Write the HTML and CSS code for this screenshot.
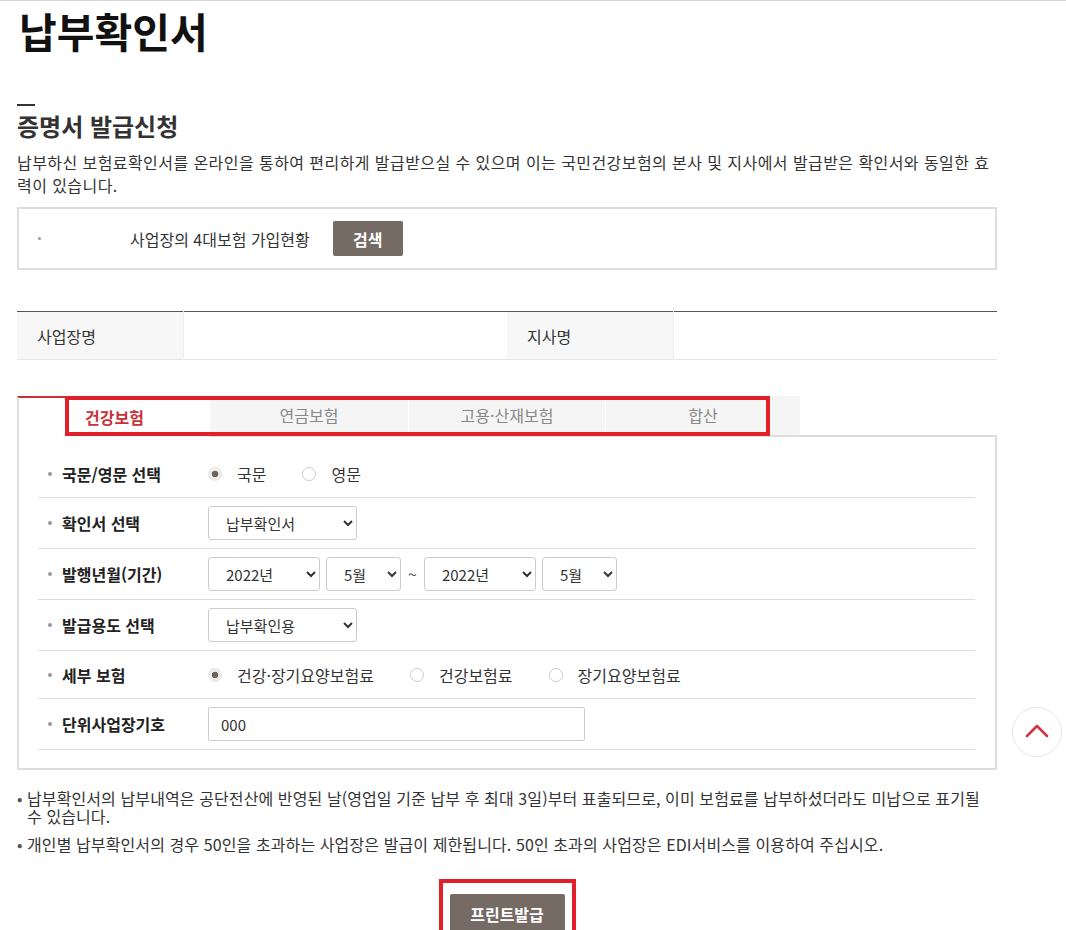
FILE: index.html
```html
<!DOCTYPE html>
<html lang="ko">
<head>
    <meta charset="UTF-8">
    <meta name="viewport" content="width=device-width, initial-scale=1.0">
    <title>납부확인서</title>
    <link rel="stylesheet" href="styles.css">
</head>
<body>
    <div class="page">
        <h1 class="page-title">납부확인서</h1>

        <span class="section-bar"></span>
        <h2 class="section-title">증명서 발급신청</h2>
        <p class="intro">납부하신 보험료확인서를 온라인을 통하여 편리하게 발급받으실 수 있으며 이는 국민건강보험의 본사 및 지사에서 발급받은 확인서와 동일한 효력이 있습니다.</p>

        <div class="search-box">
            <span class="search-dot"></span>
            <span class="search-label">사업장의 4대보험 가입현황</span>
            <button type="button" class="btn btn-search">검색</button>
        </div>

        <table class="info-table">
            <tr>
                <th class="col-th">사업장명</th>
                <td class="col-td"></td>
                <th class="col-th">지사명</th>
                <td class="col-td"></td>
            </tr>
        </table>

        <div class="tabs">
            <a class="tab tab-active">건강보험</a>
            <a class="tab tab-2">연금보험</a>
            <a class="tab tab-3">고용·산재보험</a>
            <a class="tab tab-4">합산</a>
            <span class="tab-fill"></span>
            <span class="highlight tabs-highlight"></span>
        </div>

        <div class="panel">
            <div class="form-row short">
                <span class="form-label">국문/영문 선택</span>
                <div class="radio-group">
                    <label class="radio"><input type="radio" name="lang" checked>국문</label>
                    <label class="radio"><input type="radio" name="lang">영문</label>
                </div>
            </div>

            <div class="form-row">
                <span class="form-label">확인서 선택</span>
                <select class="select w-149">
                    <option>납부확인서</option>
                </select>
            </div>

            <div class="form-row">
                <span class="form-label">발행년월(기간)</span>
                <div class="period">
                    <select class="select w-112"><option>2022년</option></select>
                    <select class="select w-75"><option>5월</option></select>
                    <span class="tilde">~</span>
                    <select class="select w-112"><option>2022년</option></select>
                    <select class="select w-75"><option>5월</option></select>
                </div>
            </div>

            <div class="form-row">
                <span class="form-label">발급용도 선택</span>
                <select class="select w-149">
                    <option>납부확인용</option>
                </select>
            </div>

            <div class="form-row short">
                <span class="form-label">세부 보험</span>
                <div class="radio-group">
                    <label class="radio"><input type="radio" name="detail" checked>건강·장기요양보험료</label>
                    <label class="radio"><input type="radio" name="detail">건강보험료</label>
                    <label class="radio"><input type="radio" name="detail">장기요양보험료</label>
                </div>
            </div>

            <div class="form-row">
                <span class="form-label">단위사업장기호</span>
                <input type="text" class="text-input" value="000">
            </div>
        </div>

        <ul class="notes">
            <li>납부확인서의 납부내역은 공단전산에 반영된 날(영업일 기준 납부 후 최대 3일)부터 표출되므로, 이미 보험료를 납부하셨더라도 미납으로 표기될 수 있습니다.</li>
            <li>개인별 납부확인서의 경우 50인을 초과하는 사업장은 발급이 제한됩니다. 50인 초과의 사업장은 EDI서비스를 이용하여 주십시오.</li>
        </ul>

        <div class="actions">
            <span class="print-wrap">
                <button type="button" class="btn btn-print">프린트발급</button>
                <span class="highlight print-highlight"></span>
            </span>
        </div>
    </div>

    <a class="top-btn" href="#">
        <svg width="24" height="14" viewBox="0 0 24 14">
            <path d="M2 12 L12 2 L22 12" fill="none" stroke="#d2353d" stroke-width="2.6" stroke-linecap="round" stroke-linejoin="round"/>
        </svg>
    </a>
</body>
</html>
```

FILE: styles.css
```css
:root {
    --text-color: #333;
    --line-color: #ddd;
    --brown: #756a64;
    --red: #c9303a;
    --mark-red: #e31f2a;
}

* {
    margin: 0;
    padding: 0;
    box-sizing: border-box;
}

body {
    font-family: "Noto Sans CJK KR", "Malgun Gothic", sans-serif;
    font-size: 16px;
    color: var(--text-color);
    background-color: #fff;
    border-top: 1px solid #d8d8d8;
}

.page {
    width: 1014px;
    padding: 0 17px 40px;
}

.page-title {
    font-size: 41px;
    line-height: 59px;
    font-weight: 700;
    color: #111;
    padding-left: 2px;
}

.section-bar {
    display: block;
    width: 18px;
    height: 2px;
    background-color: #333;
    margin-top: 44px;
}

.section-title {
    font-size: 24px;
    line-height: 30px;
    font-weight: 700;
    margin-top: 5px;
}

.intro {
    margin-top: 10px;
    line-height: 23px;
    letter-spacing: 0.43px;
}

/* search box */
.search-box {
    margin-top: 10px;
    border: 2px solid var(--line-color);
    padding: 12px 0;
    display: flex;
    align-items: center;
}

.search-dot {
    width: 3px;
    height: 3px;
    border-radius: 50%;
    background-color: #999;
    margin-left: 19px;
}

.search-label {
    margin-left: 89px;
}

.btn {
    border: none;
    border-radius: 2px;
    background-color: var(--brown);
    color: #fff;
    font-family: inherit;
    font-size: 16px;
    font-weight: 700;
    cursor: pointer;
}

.btn-search {
    width: 70px;
    height: 35px;
    margin-left: 23px;
}

/* info table */
.info-table {
    margin-top: 41px;
    width: 100%;
    border-collapse: collapse;
    border-top: 1px solid #555;
    border-bottom: 1px solid #e5e5e5;
}

.info-table th,
.info-table td {
    height: 48px;
}

.col-th {
    width: 166px;
    background-color: #f7f7f7;
    font-weight: 400;
    text-align: left;
    padding-left: 20px;
}

.col-td {
    width: 324px;
    border-left: 1px solid #eee;
}

/* tabs */
.tabs {
    position: relative;
    margin-top: 36px;
    display: flex;
    height: 41px;
}

.tab {
    display: block;
    background-color: #f5f5f5;
    color: #888;
    text-align: center;
    line-height: 39px;
    border-bottom: 2px solid var(--line-color);
    border-left: 1px solid #fff;
}

.tab-active {
    width: 193px;
    background-color: #fff;
    color: var(--red);
    font-weight: 700;
    border-top: 2px solid var(--red);
    border-left: 2px solid var(--line-color);
    border-bottom: none;
    line-height: 38px;
}

.tab-2 { width: 198px; border-left: none; }
.tab-3 { width: 197px; }
.tab-4 { width: 195px; }

.tab-fill {
    flex: 1;
    border-bottom: 2px solid var(--line-color);
}

.highlight {
    position: absolute;
    border: 4px solid var(--mark-red);
    pointer-events: none;
}

.tabs-highlight {
    left: 48px;
    top: 0;
    width: 705px;
    height: 40px;
}

/* form panel */
.panel {
    border: 2px solid var(--line-color);
    border-top: none;
    padding: 13px 20px 18px 19px;
}

.form-row {
    display: flex;
    align-items: center;
    height: 51px;
    border-bottom: 1px solid var(--line-color);
}

.form-row.short {
    height: 48px;
}

.form-label {
    width: 170px;
    flex-shrink: 0;
    display: flex;
    align-items: center;
    padding-left: 10px;
    font-weight: 700;
    color: #222;
}

.form-label::before {
    content: "";
    width: 4px;
    height: 4px;
    border-radius: 50%;
    background-color: #999;
    margin-right: 10px;
}

.radio-group {
    display: flex;
    align-items: center;
}

.radio {
    display: flex;
    align-items: center;
    margin-right: 36px;
}

.radio input {
    appearance: none;
    -webkit-appearance: none;
    width: 14px;
    height: 14px;
    margin: 0 15px 0 0;
    border: 1px solid #ccc;
    border-radius: 50%;
    background-color: #fff;
}

.radio input:checked {
    border-color: #e6e6e6;
    background: radial-gradient(circle, #6e625c 0 3px, #ededed 3.6px);
}

.select {
    height: 34px;
    border: 1px solid #ccc;
    border-radius: 3px;
    padding: 0 8px 0 13px;
    font-family: inherit;
    font-size: 15px;
    color: #333;
    background-color: #fff;
}

.w-149 { width: 149px; }
.w-112 { width: 112px; }
.w-75 { width: 75px; }

.period {
    display: flex;
    align-items: center;
    gap: 6px;
}

.tilde {
    margin: 0 1px;
    color: #555;
}

.text-input {
    width: 377px;
    height: 34px;
    border: 1px solid #ccc;
    border-radius: 2px;
    padding-left: 12px;
    font-family: inherit;
    font-size: 15px;
    color: #333;
}

/* notes */
.notes {
    list-style: none;
    margin-top: 19px;
}

.notes li {
    line-height: 18px;
    letter-spacing: 0.1px;
    padding-left: 10px;
    text-indent: -10px;
}

.notes li + li {
    margin-top: 10px;
}

.notes li::before {
    content: "•";
    display: inline-block;
    width: 10px;
    text-indent: 0;
    color: #555;
}

/* print button */
.actions {
    margin-top: 41px;
    text-align: center;
}

.print-wrap {
    position: relative;
    display: inline-block;
}

.btn-print {
    width: 115px;
    height: 40px;
    display: block;
}

.print-highlight {
    top: -15px;
    left: -11px;
    right: -11px;
    bottom: -15px;
}

/* back to top */
.top-btn {
    position: absolute;
    left: 1012px;
    top: 707px;
    width: 50px;
    height: 50px;
    border: 1px solid #f0e2e2;
    border-radius: 50%;
    background-color: #fff;
    display: flex;
    align-items: center;
    justify-content: center;
}

.top-btn svg {
    margin-bottom: 3px;
}
```
